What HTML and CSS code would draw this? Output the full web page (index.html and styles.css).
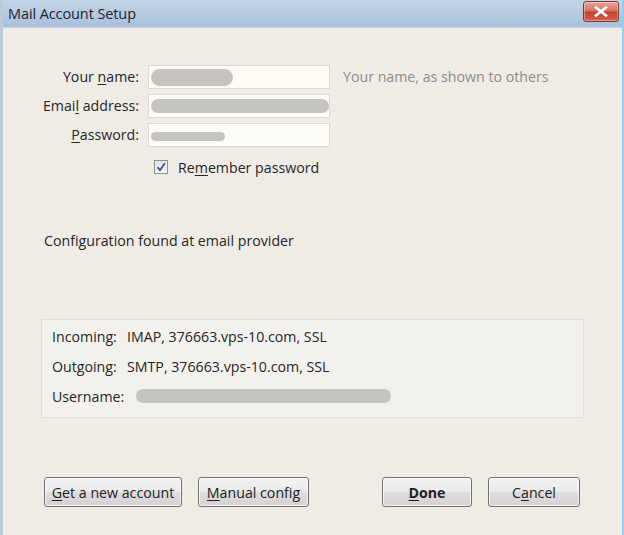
FILE: index.html
```html
<!DOCTYPE html>
<html>
<head>
<meta charset="utf-8">
<link rel="stylesheet" href="styles.css">
</head>
<body>
<div class="window">
  <div class="titlebar">
    <span class="title">Mail Account Setup</span>
    <div class="close">
      <svg width="14" height="11" viewBox="0 0 14 11"><path d="M2 1.5 L12 9.5 M12 1.5 L2 9.5" stroke="#ffffff" stroke-width="2.6" stroke-linecap="square"/></svg>
    </div>
  </div>
  <div class="content">
    <div class="form">
      <div class="row">
        <label class="lbl">Your <u>n</u>ame:</label>
        <div class="input"><span class="blob b-name"></span></div>
        <span class="hint">Your name, as shown to others</span>
      </div>
      <div class="row">
        <label class="lbl">Emai<u>l</u> address:</label>
        <div class="input"><span class="blob b-email"></span></div>
      </div>
      <div class="row">
        <label class="lbl"><u>P</u>assword:</label>
        <div class="input"><span class="blob b-pass"></span></div>
      </div>
      <div class="check-row">
        <span class="checkbox">
          <svg width="10" height="10" viewBox="0 0 10 10"><path d="M1.5 5.2 L4 8.2 L8.8 1.2" fill="none" stroke="#3b55a8" stroke-width="1.8"/></svg>
        </span>
        <span class="check-label">Re<u>m</u>ember password</span>
      </div>
    </div>
    <p class="status">Configuration found at email provider</p>
    <div class="config">
      <div class="crow"><span class="clbl">Incoming:</span><span class="cval">IMAP, 376663.vps-10.com, SSL</span></div>
      <div class="crow"><span class="clbl">Outgoing:</span><span class="cval">SMTP, 376663.vps-10.com, SSL</span></div>
      <div class="crow"><span class="clbl">Username:</span><span class="blob b-user"></span></div>
    </div>
    <div class="buttons">
      <div class="left">
        <button class="btn b-new"><u>G</u>et a new account</button>
        <button class="btn b-manual"><u>M</u>anual config</button>
      </div>
      <div class="right">
        <button class="btn b-done"><b><u>D</u>one</b></button>
        <button class="btn b-cancel">C<u>a</u>ncel</button>
      </div>
    </div>
  </div>
</div>
</body>
</html>
```

FILE: styles.css
```css
* { box-sizing: border-box; }
html, body { margin: 0; padding: 0; }
body {
  width: 624px;
  height: 535px;
  overflow: hidden;
  font-family: "Open Sans", "Noto Sans", sans-serif;
  font-size: 14.2px;
  letter-spacing: 0;
  color: #262626;
  background: #efece6;
}
u { text-decoration: underline; text-underline-offset: 2px; text-decoration-thickness: 1px; }

.window {
  width: 624px;
  height: 535px;
  display: flex;
  flex-direction: column;
  border-left: 3px solid #bccbda;
  border-right: 2px solid #8fd0ee;
}

.titlebar {
  height: 28px;
  flex: none;
  display: flex;
  align-items: center;
  justify-content: space-between;
  padding: 0 3px 0 5px;
  background: linear-gradient(#c3d4e6, #a9c0da);
  border-bottom: 1px solid #c8d3df;
}
.title {
  font-size: 14.5px;
  color: #1c2430;
  letter-spacing: -0.1px;
}
.close {
  width: 36px;
  height: 21px;
  margin-top: -4px;
  border: 1px solid #7a3a34;
  border-radius: 3px;
  background: linear-gradient(#e9a89c 0%, #d7705f 45%, #c2412e 55%, #d4624c 100%);
  display: flex;
  align-items: center;
  justify-content: center;
  box-shadow: inset 0 0 0 1px rgba(255,255,255,0.35);
}

.content {
  flex: 1;
  display: flex;
  flex-direction: column;
  padding: 0 38px 0 38px;
  background: #efece6;
}

.form {
  padding-top: 37px;
  display: flex;
  flex-direction: column;
  gap: 6px;
}
.row {
  display: flex;
  align-items: center;
  height: 23px;
}
.lbl {
  width: 107px;
  flex: none;
  text-align: right;
  padding-right: 9px;
  white-space: nowrap;
}
.input {
  width: 182px;
  height: 24px;
  background: #fdfbf5;
  border: 1px solid #dcd9d2;
  display: flex;
  align-items: center;
  padding-left: 2px;
}
.hint {
  margin-left: 13px;
  color: #8c8c8c;
}
.blob {
  display: block;
  background: #c5c4c0;
  border-radius: 10px;
  height: 14px;
}
.b-name { width: 82px; height: 17px; margin-top: 2px; }
.b-email { width: 182px; height: 14px; }
.b-pass { width: 74px; height: 9px; margin-top: 4px; }

.check-row {
  display: flex;
  align-items: center;
  margin-left: 113px;
  margin-top: 6px;
  height: 18px;
}
.checkbox {
  width: 14px;
  height: 14px;
  border: 1px solid #8e8f8f;
  background: linear-gradient(#e4e4e4, #f8f8f8);
  display: flex;
  align-items: center;
  justify-content: center;
  margin-right: 10px;
}

.status {
  margin: 55px 0 0 3px;
}

.config {
  margin-top: 69px;
  width: 543px;
  height: 99px;
  background: #f3f1ed;
  border: 1px solid #e2dfd9;
  display: flex;
  flex-direction: column;
  padding: 1px 0 0 10px;
}
.crow {
  height: 30px;
  display: flex;
  align-items: center;
}
.clbl {
  width: 75px;
  flex: none;
}
.b-user { width: 255px; height: 14px; margin-left: 9px; }

.buttons {
  margin-top: 59px;
  margin-left: 3px;
  display: flex;
  justify-content: space-between;
  width: 536px;
}
.left, .right { display: flex; gap: 16px; }
.btn {
  height: 30px;
  font-family: inherit;
  font-size: 14.2px;
  color: #222;
  border: 1px solid #707070;
  border-radius: 3px;
  background: linear-gradient(#f2f2f2 0%, #ebebeb 48%, #dddddd 52%, #d3d3d3 100%);
  box-shadow: inset 0 0 0 1px rgba(255,255,255,0.7);
  padding: 0;
}
.b-new { width: 138px; }
.b-manual { width: 111px; }
.b-done { width: 90px; }
.b-cancel { width: 92px; }
```
